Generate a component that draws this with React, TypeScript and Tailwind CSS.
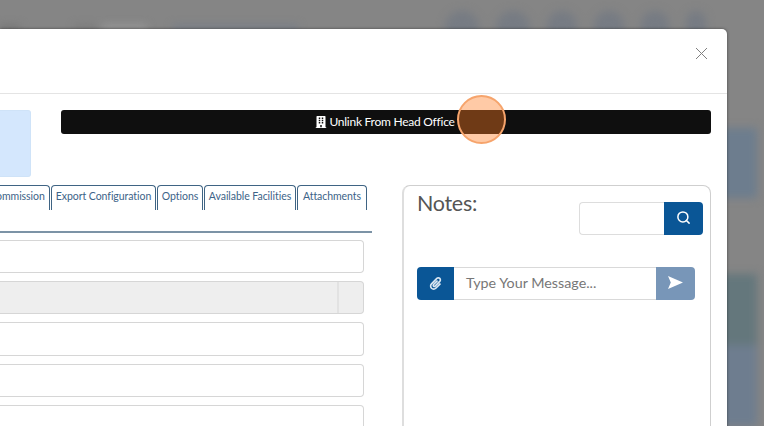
import { FaBuilding, FaPaperclip } from "react-icons/fa";
import { Search } from "lucide-react";

const tabs = [
  { label: "Commission", w: "w-[66px]" },
  { label: "Export Configuration", w: "w-[105px]" },
  { label: "Options", w: "w-[46px]" },
  { label: "Available Facilities", w: "w-[92px]" },
  { label: "Attachments", w: "w-[70px]" },
];

function Field({ disabled, tall }: { disabled?: boolean; tall?: boolean }) {
  return (
    <div className={`${tall ? "h-[34px]" : "h-[33px]"} w-[364px] rounded-r-[4px] border border-l-0 border-[#d6d6d6] flex justify-end ${disabled ? "bg-[#eeeeee]" : "bg-white"}`}>
      {disabled && <div className="w-[26px] border-l-2 border-[#e2e2e2]" />}
    </div>
  );
}

export default function App() {
  return (
    <div className="relative h-[426px] w-[764px] overflow-hidden bg-[#858585] font-['Lato',sans-serif]">
      <div className="flex h-full w-full flex-col blur-[4px]">
        <div className="flex h-[128px] items-start">
          <div className="mt-[25px] flex items-center">
            <div className="h-[6px] w-[20px] bg-[#747474]" />
            <div className="ml-[55px] h-[6px] w-[22px] bg-[#7a7a7a]" />
            <div className="ml-[5px] h-[6px] w-[45px] bg-[#9a9a9a]" />
            <div className="ml-[26px] h-[6px] w-[125px] bg-[#767d88]" />
          </div>
          <div className="ml-[147px] mt-[11px] flex gap-[17px]">
            {["w-[34px]", "w-[34px]", "w-[30px]", "w-[30px]", "w-[28px]", "w-[20px]"].map((w, i) => (
              <div key={i} className={`${w} h-[34px] rounded-full bg-[#767b83]`} />
            ))}
          </div>
        </div>
        <div className="h-[70px] w-[757px] bg-[#6d7d8e] self-start" />
        <div className="h-[76px]" />
        <div className="h-[71px] w-[757px] bg-[#64777c]" />
        <div className="w-[757px] flex-1 bg-[#6e7d8f]" />
      </div>

      <div className="absolute left-0 top-[29px] h-[420px] w-[727px] rounded-tr-[5px] bg-white shadow-[0_0_3px_rgba(0,0,0,0.5)]">
        <div className="flex h-[65px] items-start justify-end border-b border-[#e4e4e4] pr-[19px] pt-[18px]">
          <svg width="13" height="13" viewBox="0 0 13 13" fill="none" stroke="#808080" strokeWidth="1">
            <path d="M1 1 12 12M12 1 1 12" />
          </svg>
        </div>

        <div className="flex pt-[16px]">
          <div className="h-[67px] w-[31px] rounded-r-[3px] border border-l-0 border-[#cfe3f8] bg-[#d4e7fd]" />
          <div className="ml-[30px] flex h-[24px] w-[650px] items-center justify-center gap-[2px] rounded-[3px] bg-[#0f0f0f] pb-[1px] pr-[2px] text-[12px] tracking-[-0.25px] text-white">
            <FaBuilding className="text-[12px]" />
            <span>Unlink From Head Office</span>
          </div>
        </div>

        <div className="flex pt-[8px]">
          <div className="w-[372px]">
            <div className="flex h-[48px] justify-end gap-[1px] overflow-hidden border-b-2 border-[#7c93a6] pr-[5px]">
              {tabs.map((t) => (
                <div
                  key={t.label}
                  className={`${t.w} flex h-[25px] shrink-0 items-center justify-center whitespace-nowrap rounded-t-[4px] border border-b-0 border-[#3f6484] pb-[2px] text-[10.5px] tracking-[-0.05px] text-[#3d6388]`}
                >
                  {t.label}
                </div>
              ))}
            </div>
            <div className="flex flex-col gap-[8px] pt-[7px]">
              <Field />
              <Field disabled />
              <Field tall />
              <Field />
              <Field />
            </div>
          </div>

          <div className="ml-[30px] h-[300px] w-[309px] rounded-[8px] border border-[#cfcfcf] border-l-2 border-l-[#dedede] pl-[13px] pr-[7px]">
            <div className="flex justify-between">
              <div className="text-[21.5px] leading-[34px] tracking-[-0.3px] text-[#555555]">Notes:</div>
              <div className="mt-[16px] flex h-[33px] w-[124px]">
                <div className="w-[85px] rounded-l-[4px] border border-r-0 border-[#dddddd] bg-white" />
                <div className="flex w-[39px] items-center justify-center rounded-r-[4px] bg-[#0a5696] pb-[3px] text-white">
                  <Search size={15} strokeWidth={2.4} />
                </div>
              </div>
            </div>
            <div className="mt-[32px] flex h-[33px] w-[278px]">
              <div className="flex w-[37px] items-center justify-center rounded-l-[4px] bg-[#0a5696] text-[13px] text-[#dce8f3]">
                <FaPaperclip />
              </div>
              <div className="flex w-[202px] items-center border-y border-[#d9d9d9] pb-[2px] pl-[12px] text-[14.3px] text-[#777777]">
                Type Your Message...
              </div>
              <div className="flex w-[39px] items-center justify-center rounded-r-[4px] bg-[#7896b8] pb-[2px]">
                <svg width="15" height="13" viewBox="0 0 15 13" fill="white">
                  <path d="M0 0 15 6.5 0 13 2.8 6.5Z" />
                </svg>
              </div>
            </div>
          </div>
        </div>
      </div>

      <div className="absolute left-[457px] top-[95px] h-[49px] w-[49px] rounded-full border-2 border-[#f6a46c] bg-[#ff7a20]/40" />
    </div>
  );
}
